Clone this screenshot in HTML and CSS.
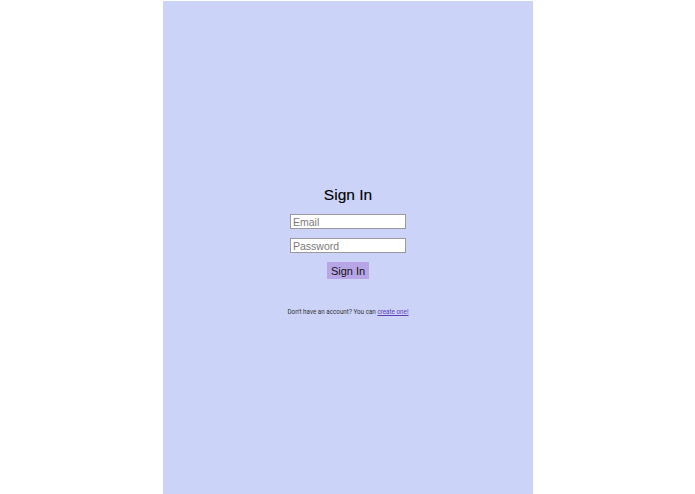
FILE: index.html
```html
<!DOCTYPE html>
<html>
<head>
<meta charset="utf-8">
<link rel="stylesheet" href="styles.css">
</head>
<body>
<div class="page">
  <div class="panel">
    <h1 class="title">Sign In</h1>
    <form class="form">
      <input class="field" type="text" placeholder="Email">
      <input class="field" type="password" placeholder="Password">
      <button class="btn" type="button">Sign In</button>
    </form>
    <p class="note">Don't have an account? You can <a class="link" href="#">create one!</a></p>
  </div>
</div>
</body>
</html>
```
FILE: styles.css
```css
html, body { margin: 0; padding: 0; background: #fff; }
.page { display: flex; justify-content: center; padding-top: 1px; height: 493px; }
.panel {
  width: 370px; margin-left: 1px;
  background: #cbd3f8;
  display: flex; flex-direction: column; align-items: center;
  padding-top: 184px; box-sizing: border-box;
}
.title {
  margin: 0; font-family: "Liberation Sans", Arial, sans-serif;
  font-weight: normal; font-size: 15.5px; line-height: 20px; color: #000;
  -webkit-text-stroke: 0.15px #000;
}
.form { display: flex; flex-direction: column; align-items: center; gap: 9px; margin-top: 9px; }
.field {
  width: 116px; height: 15px; box-sizing: border-box; margin: 0;
  border: 1px solid #9a9a9a; background: #fff; padding: 0 2px;
  font-family: "Liberation Sans", Arial, sans-serif; font-size: 10.5px;
}
.field::placeholder { color: #7a7a7a; }
.btn {
  margin: 0; border: none; background: #b6a6e6; padding: 0 4px;
  height: 17px; font-family: "Liberation Sans", Arial, sans-serif; font-size: 11px; color: #111;
}
.note {
  margin: 29px 0 0; font-family: Roboto, sans-serif; font-size: 6.3px; color: #333;
}
.link { color: #6040b8; }
```
